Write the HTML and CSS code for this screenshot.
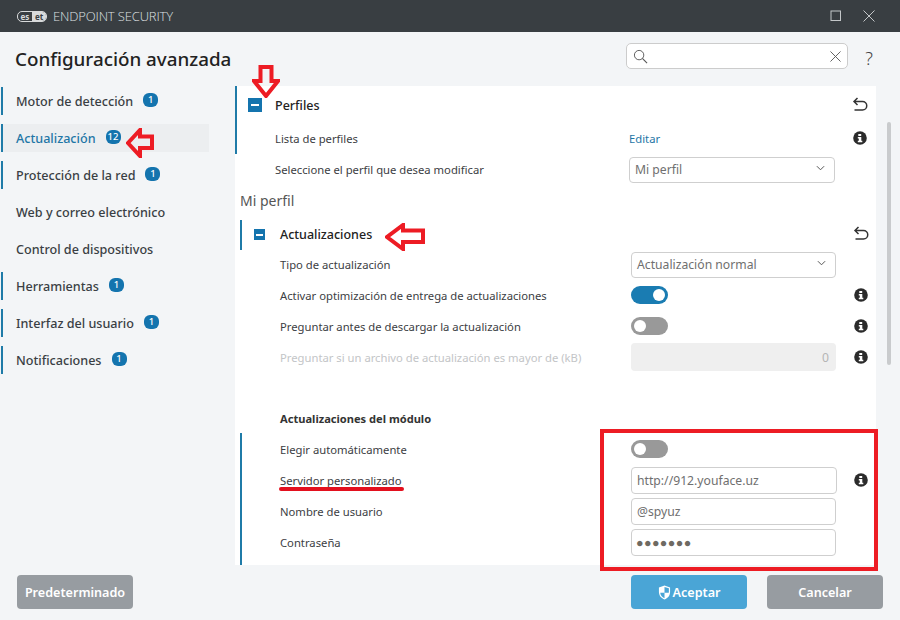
FILE: index.html
```html
<!DOCTYPE html>
<html lang="es">
<head>
<meta charset="utf-8">
<title>ESET Endpoint Security</title>
<link rel="stylesheet" href="styles.css">
</head>
<body>
<div class="app">
  <header class="titlebar">
    <div class="brand">
      <span class="logo"><span class="logo-es">es</span><span class="logo-et">et</span></span>
      <span class="product">ENDPOINT SECURITY</span>
    </div>
    <div class="winbtns">
      <svg class="winicon" viewBox="0 0 12 12"><rect x="1" y="1" width="9.5" height="9.5" fill="none" stroke="#c4c7c9" stroke-width="1"/></svg>
      <svg class="winicon" viewBox="0 0 12 12"><path d="M.5.5l11 11M11.5.5l-11 11" fill="none" stroke="#c4c7c9" stroke-width="1"/></svg>
    </div>
  </header>

  <div class="pagehead">
    <h1 class="pagetitle">Configuración avanzada</h1>
    <div class="search">
      <svg class="search-icon" viewBox="0 0 16 16"><circle cx="6.5" cy="6.5" r="5" fill="none" stroke="#555" stroke-width="1"/><path d="M10 10l5 5" stroke="#555" stroke-width="1.2"/></svg>
      <svg class="search-clear" viewBox="0 0 12 12"><path d="M.5.5l11 11M11.5.5l-11 11" fill="none" stroke="#555" stroke-width="1"/></svg>
    </div>
    <span class="help">?</span>
  </div>

  <div class="main">
    <nav class="sidebar">
      <a class="navitem marked">Motor de detección<span class="badge">1</span></a>
      <a class="navitem marked active">Actualización<span class="badge">12</span></a>
      <a class="navitem marked">Protección de la red<span class="badge">1</span></a>
      <a class="navitem">Web y correo electrónico</a>
      <a class="navitem">Control de dispositivos</a>
      <a class="navitem marked">Herramientas<span class="badge">1</span></a>
      <a class="navitem marked">Interfaz del usuario<span class="badge">1</span></a>
      <a class="navitem marked">Notificaciones<span class="badge">1</span></a>
    </nav>

    <section class="panel">
      <div class="group first">
        <div class="marker m-perfiles"></div>
        <div class="row headrow">
          <span class="toggle-box big"><i></i></span>
          <span class="heading">Perfiles</span>
          <span></span>
          <svg class="undo" viewBox="0 0 16 16"><path d="M5.500 1L2 4.500 5.500 8M2 4.500h8.500a4 4 0 0 1 0 8.500H2.500" fill="none" stroke="#333" stroke-width="1.500"/></svg>
        </div>
        <div class="row"><span class="label">Lista de perfiles</span><a class="editlink">Editar</a><svg class="info" viewBox="0 0 14 14"><use href="#i-info"/></svg></div>
        <div class="row"><span class="label">Seleccione el perfil que desea modificar</span>
          <div class="field select"><span>Mi perfil</span><svg class="chev" viewBox="0 0 10 6"><path d="M1 1l4 4 4-4" fill="none" stroke="#555" stroke-width="1.1"/></svg></div>
          <span></span></div>
      </div>

      <h2 class="subtitle">Mi perfil</h2>

      <div class="group second">
        <div class="marker m-actual"></div>
        <div class="row headrow">
          <span class="toggle-box"><i></i></span>
          <span class="heading">Actualizaciones</span>
          <span></span>
          <svg class="undo" viewBox="0 0 16 16"><path d="M5.500 1L2 4.500 5.500 8M2 4.500h8.500a4 4 0 0 1 0 8.500H2.500" fill="none" stroke="#333" stroke-width="1.500"/></svg>
        </div>
        <div class="row"><span class="label">Tipo de actualización</span>
          <div class="field select"><span>Actualización normal</span><svg class="chev" viewBox="0 0 10 6"><path d="M1 1l4 4 4-4" fill="none" stroke="#555" stroke-width="1.1"/></svg></div>
          <span></span></div>
        <div class="row"><span class="label">Activar optimización de entrega de actualizaciones</span><span class="switch on"></span><svg class="info" viewBox="0 0 14 14"><use href="#i-info"/></svg></div>
        <div class="row"><span class="label">Preguntar antes de descargar la actualización</span><span class="switch"></span><svg class="info" viewBox="0 0 14 14"><use href="#i-info"/></svg></div>
        <div class="row"><span class="label disabled">Preguntar si un archivo de actualización es mayor de (kB)</span><div class="field numeric">0</div><svg class="info" viewBox="0 0 14 14"><use href="#i-info"/></svg></div>
        <div class="spacer"></div>
        <div class="row"><span class="label strong">Actualizaciones del módulo</span><span></span><span></span></div>
        <div class="module">
          <div class="marker m-module"></div>
          <div class="row"><span class="label">Elegir automáticamente</span><span class="switch"></span><span></span></div>
          <div class="row"><span class="label">Servidor personalizado</span><div class="field wide">http://912.youface.uz</div><svg class="info" viewBox="0 0 14 14"><use href="#i-info"/></svg></div>
          <div class="row"><span class="label">Nombre de usuario</span><div class="field">@spyuz</div><span></span></div>
          <div class="row"><span class="label">Contraseña</span><div class="field pass">●●●●●●●</div><span></span></div>
        </div>
      </div>
    </section>

    <div class="scrolltrack"><div class="scrollthumb"></div></div>
  </div>

  <footer class="footer">
    <button class="btn gray">Predeterminado</button>
    <div class="footer-right">
      <button class="btn blue"><svg class="shield" viewBox="0 0 14 16"><path d="M7 .5l6 2v5c0 4-2.6 6.700-6 8-3.400-1.300-6-4-6-8v-5z" fill="#fff"/><path d="M7 2.200v6H2.400c.2 2.800 2 4.800 4.600 6V8.200h4.600c.1-.6.100-1 .1-1.500V3.500z" fill="#4aa5d6"/></svg>Aceptar</button>
      <button class="btn gray">Cancelar</button>
    </div>
  </footer>

  <!-- annotations drawn over the screenshot -->
  <svg class="annot a-down" viewBox="0 0 28 33"><path d="M8.500 2h11v14H26L14 31 2 16h6.500z" fill="none" stroke="#ed1c24" stroke-width="4"/></svg>
  <svg class="annot a-left1" viewBox="0 0 28 30"><path d="M26 8.500V20H14v8L2 15 14 2v6.500z" fill="none" stroke="#ed1c24" stroke-width="4"/></svg>
  <svg class="annot a-left2" viewBox="0 0 40 28"><path d="M38 7.500V19H18v7L2 14 18 2v5.500z" fill="none" stroke="#ed1c24" stroke-width="4"/></svg>
  <div class="annot a-underline"></div>
  <div class="annot a-rect"></div>

  <svg class="defs" width="0" height="0"><defs><g id="i-info"><circle cx="7" cy="7" r="6.800" fill="#2b2b2b"/><path d="M5.300 3h2.900v1.900H5.300zM4.800 6h3.500v3.700h1v1.500H4.800V9.700h1V7.500h-1z" fill="#fff"/></g></defs></svg>
</div>
</body>
</html>
```
FILE: styles.css
```css
* { box-sizing: border-box; }
html, body { margin: 0; padding: 0; }
body {
  width: 900px;
  height: 620px;
  overflow: hidden;
  font-family: "Noto Sans", "Open Sans", sans-serif;
  color: #333;
  background: #f3f5f7;
}
.app {
  position: relative;
  display: flex;
  flex-direction: column;
  height: 620px;
}

/* title bar */
.titlebar {
  height: 32px;
  flex: none;
  display: flex;
  align-items: center;
  justify-content: space-between;
  background: #393e42;
  padding: 0 25px 0 17px;
}
.brand { display: flex; align-items: center; gap: 6px; }
.logo {
  display: flex;
  height: 11px;
  width: 30px;
  border: 1px solid #d8dadb;
  border-radius: 5px;
  font-size: 8px;
  line-height: 9px;
  font-weight: 700;
  color: #d8dadb;
}
.logo-es { flex: 1; text-align: center; }
.logo-et { flex: 1; text-align: center; background: #d8dadb; color: #393e42; border-radius: 0 4px 4px 0; }
.product {
  font-family: "Open Sans", sans-serif;
  font-weight: 300;
  font-size: 13px;
  letter-spacing: -0.15px;
  color: #dfe1e2;
}
.winbtns { display: flex; align-items: center; gap: 21px; }
.winicon { width: 12px; height: 12px; display: block; }

/* page heading */
.pagehead {
  height: 54px;
  flex: none;
  display: flex;
  align-items: center;
  padding: 0 10px 0 15px;
}
.pagetitle {
  flex: 1;
  margin: 0;
  font-size: 18.800px;
  font-weight: 500;
  color: #222;
}
.search {
  width: 222px;
  height: 26px;
  background: #fff;
  border: 1px solid #ccc;
  border-radius: 5px;
  display: flex;
  align-items: center;
  justify-content: space-between;
  padding: 0 6px;
  margin-top: -6px;
}
.search-icon { width: 15px; height: 15px; }
.search-clear { width: 11px; height: 11px; }
.help { width: 42px; text-align: center; font-size: 18px; font-weight: 300; color: #444; margin-top: -3px; }

/* main */
.main { flex: 1; display: flex; min-height: 0; }
.sidebar {
  width: 235px;
  flex: none;
  display: flex;
  flex-direction: column;
  gap: 9px;
  padding: 1px 26px 0 1px;
}
.navitem {
  height: 28px;
  display: flex;
  align-items: center;
  gap: 10px;
  padding-left: 15px;
  font-size: 12.600px;
  font-weight: 500;
  color: #3a3f44;
  white-space: nowrap;
}
.navitem.marked { border-left: 2px solid #1f7ba8; padding-left: 13px; }
.navitem.active { background: #eceef0; color: #1f76a6; }
.badge {
  min-width: 15px;
  height: 14px;
  border-radius: 6px;
  background: #1474ae;
  color: #fff;
  font-size: 9.500px;
  line-height: 14px;
  font-weight: 500;
  text-align: center;
  margin-top: -2px;
}

/* panel */
.panel {
  width: 641px;
  flex: none;
  background: #fff;
  overflow: hidden;
}
.group { position: relative; }
.group.first { padding-top: 1px; }
.group.second { margin-left: 5px; }
.marker { position: absolute; left: 0; width: 2px; background: #1f7ba8; }
.m-perfiles { top: 0; height: 68px; }
.m-actual { top: 1px; height: 30px; }
.m-module { top: -1px; bottom: -10px; }
.module { position: relative; }
.row {
  display: grid;
  grid-template-columns: 1fr 206px 41px;
  align-items: center;
  height: 31px;
  padding-left: 40px;
  position: relative;
}
.second .row { grid-template-columns: 1fr 205px 40px; }
.first .headrow { height: 36px; }
.second .headrow { height: 30px; }
.toggle-box {
  position: absolute;
  left: 13px;
  top: 11px;
  width: 14px;
  height: 14px;
  background: #1474ae;
  display: flex;
  align-items: center;
  justify-content: center;
}
.toggle-box i { display: block; width: 8px; height: 2px; background: #fff; }
.second .toggle-box { left: 14px; top: 10px; width: 11px; height: 11px; }
.second .toggle-box i { width: 7px; }
.heading { font-size: 12.500px; font-weight: 500; color: #222; }
.label { font-size: 11.250px; color: #3c4043; white-space: nowrap; }
.label.strong { font-weight: 700; color: #333; font-size: 11.100px; }
.label.disabled { color: #c3c5c7; }
.editlink { font-size: 11.250px; color: #1f76a6; }
.info { width: 14px; height: 14px; margin: -1px 0 0 18px; display: block; }
.undo { width: 16px; height: 16px; margin: 0 0 0 17px; display: block; }
.subtitle {
  margin: 0 0 0 5px;
  height: 34px;
  line-height: 32px;
  font-size: 14px;
  font-weight: 400;
  color: #555;
}
.field {
  height: 27px;
  border: 1px solid #cfcfcf;
  border-radius: 4px;
  display: flex;
  align-items: center;
  padding: 0 5px;
  font-size: 12.200px;
  color: #6f6f6f;
  background: #fff;
  white-space: nowrap;
}
.module .field { margin-top: -1px; }
.field.wide { margin-right: -1px; }
.select { justify-content: space-between; height: 26px; padding-right: 9px; }
.chev { width: 9px; height: 6px; margin-top: -4px; }
.field.numeric {
  height: 28px;
  margin-top: -1px;
  border: 0;
  background: #efefef;
  justify-content: flex-end;
  color: #b5b5b5;
  padding-right: 7px;
}
.field.pass { font-size: 12.500px; letter-spacing: 0.4px; color: #6e6a62; padding-left: 4px; }
.spacer { height: 30px; }
.switch {
  display: block;
  width: 37px;
  height: 18px;
  margin-top: -1px;
  border-radius: 9px;
  background: #999;
  position: relative;
}
.switch::after {
  content: "";
  position: absolute;
  left: 3px;
  top: 3px;
  width: 12px;
  height: 12px;
  border-radius: 50%;
  background: #fff;
}
.switch.on { background: #1a7cb2; }
.switch.on::after { left: 22px; }

/* scrollbar */
.scrolltrack { width: 24px; flex: none; padding: 36px 9px 0 11px; }
.scrollthumb { width: 4px; height: 243px; background: #c9cbcd; border-radius: 2px; }

/* footer */
.footer {
  height: 55px;
  flex: none;
  display: flex;
  align-items: flex-start;
  justify-content: space-between;
  padding: 10px 17px 0;
}
.footer-right { display: flex; gap: 20px; }
.btn {
  width: 116px;
  height: 34px;
  border: 0;
  border-radius: 4px;
  color: #fff;
  font-family: inherit;
  font-size: 12.600px;
  font-weight: 600;
  display: flex;
  align-items: center;
  justify-content: center;
  padding: 0;
}
.btn.gray { background: #979ca1; }
.btn.blue { background: #4aa5d6; }
.shield { width: 13px; height: 15px; margin-right: 2px; }

/* annotations */
.annot { position: absolute; }
.a-down { left: 252px; top: 65px; width: 28px; height: 33px; }
.a-left1 { left: 126px; top: 128px; width: 28px; height: 30px; }
.a-left2 { left: 385px; top: 223px; width: 40px; height: 28px; }
.a-underline { left: 279px; top: 487px; width: 125px; height: 4px; background: #e3101e; border-radius: 2px; }
.a-rect { left: 600px; top: 429px; width: 278px; height: 142px; border: 4.500px solid #ed1c24; }
.defs { position: absolute; }
```
